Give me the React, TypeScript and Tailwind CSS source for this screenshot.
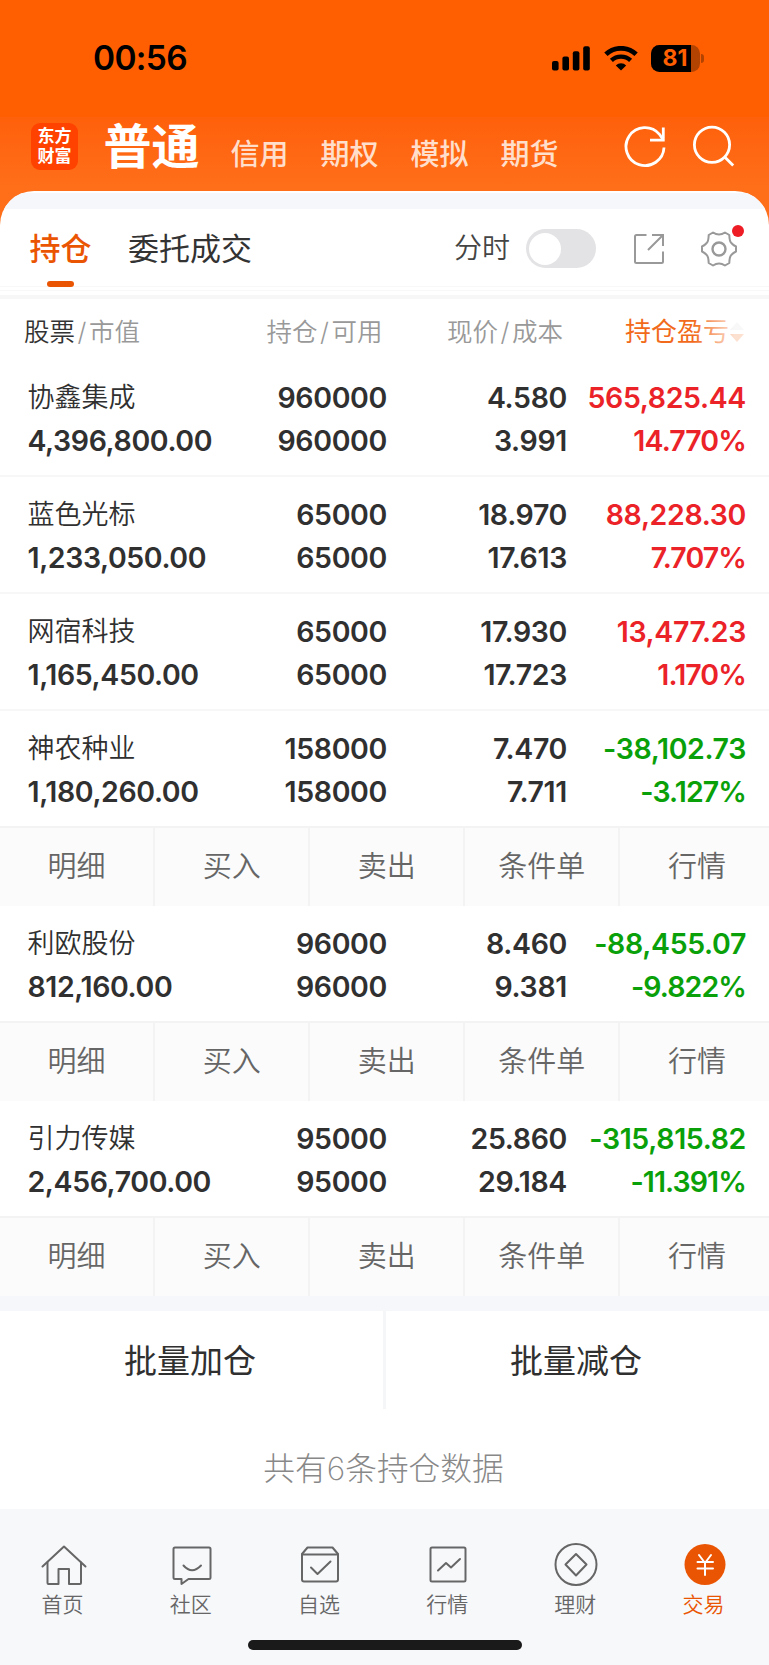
import type { ReactNode } from "react";

type Holding = {
  name: string;
  value: string;
  qty: string;
  available: string;
  price: string;
  cost: string;
  profit: string;
  rate: string;
  expanded?: boolean;
};

const holdings: Holding[] = [
  { name: "协鑫集成", value: "4,396,800.00", qty: "960000", available: "960000", price: "4.580", cost: "3.991", profit: "565,825.44", rate: "14.770%" },
  { name: "蓝色光标", value: "1,233,050.00", qty: "65000", available: "65000", price: "18.970", cost: "17.613", profit: "88,228.30", rate: "7.707%" },
  { name: "网宿科技", value: "1,165,450.00", qty: "65000", available: "65000", price: "17.930", cost: "17.723", profit: "13,477.23", rate: "1.170%" },
  { name: "神农种业", value: "1,180,260.00", qty: "158000", available: "158000", price: "7.470", cost: "7.711", profit: "-38,102.73", rate: "-3.127%", expanded: true },
  { name: "利欧股份", value: "812,160.00", qty: "96000", available: "96000", price: "8.460", cost: "9.381", profit: "-88,455.07", rate: "-9.822%", expanded: true },
  { name: "引力传媒", value: "2,456,700.00", qty: "95000", available: "95000", price: "25.860", cost: "29.184", profit: "-315,815.82", rate: "-11.391%", expanded: true },
];

const actions = ["明细", "买入", "卖出", "条件单", "行情"];

function StatusBar() {
  return (
    <div className="flex h-[117px] items-start justify-between pl-[93px] pr-[65px] pt-[37.5px]">
      <span className="text-[33.5px] font-semibold leading-[41px] tracking-[-0.7px] text-black">00:56</span>
      <div className="flex h-[41px] items-center">
        <svg width="38" height="25" viewBox="0 0 38 25" fill="#000">
          <rect x="0" y="15" width="6.6" height="9.6" rx="2" />
          <rect x="10.4" y="10.4" width="6.6" height="14.2" rx="2" />
          <rect x="20.8" y="5.2" width="6.6" height="19.4" rx="2" />
          <rect x="31.2" y="0.2" width="6.6" height="24.4" rx="2" />
        </svg>
        <svg className="ml-3.5" width="34" height="25" viewBox="0 0 34 25" fill="none" stroke="#000">
          <path d="M1.9 8.3a22 22 0 0 1 30.2 0" strokeWidth="4.8" />
          <path d="M7.4 14.4a14 14 0 0 1 19.2 0" strokeWidth="4.4" />
          <path d="M17 24.6l-5.2-5.2a7.2 7.2 0 0 1 10.4 0z" fill="#000" stroke="none" />
        </svg>
        <div className="relative ml-[13px] flex h-[27px] w-[49px] overflow-hidden rounded-[8.5px] bg-[#b34300]">
          <div className="h-full w-10 bg-black" />
          <span className="absolute inset-0 text-center text-[23px] font-bold leading-[27px] text-[#ff5f00]">81</span>
        </div>
        <div className="ml-[1.5px] h-[9px] w-[3px] rounded-r-full bg-[#b34300]" />
      </div>
    </div>
  );
}

function Header() {
  return (
    <div className="flex h-[106px] bg-gradient-to-b from-[#ff600a] to-[#ff6f1a] to-70% pl-[31px]">
      <div className="mt-[6px] flex h-[47px] w-[47px] flex-col items-center justify-center rounded-[9px] bg-[#ff4200] text-[17px] font-bold leading-[19.5px] text-white">
        <span>东方</span>
        <span>财富</span>
      </div>
      <span className="ml-[25.5px] text-[48px] font-bold leading-[59px] text-white">普通</span>
      <div className="ml-[31px] mt-[19px] flex gap-8 text-[29px] font-medium leading-[38px] text-[#ffdfcc]">
        <span>信用</span>
        <span>期权</span>
        <span>模拟</span>
        <span>期货</span>
      </div>
      <svg className="ml-[64.5px] mt-[7px]" width="44" height="46" viewBox="0 0 44 46" fill="none" stroke="#fff" strokeWidth="2.8">
        <path d="M41 23.5A19 19 0 1 1 36.5 10.3L40 15.6" />
        <path d="M40.3 3.6v12.6H27" />
      </svg>
      <svg className="ml-[25px] mt-[6px]" width="44" height="46" viewBox="0 0 44 46" fill="none" stroke="#fff" strokeWidth="2.8">
        <circle cx="20" cy="21.7" r="17.6" />
        <path d="M32.2 33.6l9 8.8" />
      </svg>
    </div>
  );
}

function Tabs() {
  return (
    <div className="flex h-[77px] items-center pl-[29.5px] pt-0.5">
      <div className="relative text-[31px] font-medium leading-[41px] text-[#ea5504]">
        持仓
        <div className="absolute -bottom-[18px] left-[17px] h-[6px] w-[27px] rounded-full bg-[#ea5504]" />
      </div>
      <span className="ml-[36.5px] text-[31px] leading-[41px] text-[#333]">委托成交</span>
      <span className="ml-[202px] text-[28px] font-[350] leading-[41px] text-[#444]">分时</span>
      <div className="ml-[15.5px] flex h-[39px] w-[70px] items-center rounded-full bg-[#e3e3e5] pl-[3px]">
        <div className="h-8 w-8 rounded-full bg-white" />
      </div>
      <svg className="ml-[37px]" width="32" height="32" viewBox="0 0 32 32" fill="none" stroke="#999" strokeWidth="2">
        <path d="M13.5 2H3.5Q2 2 2 3.5V28.5Q2 30 3.5 30H28.5Q30 30 30 28.5V18.5" />
        <path d="M19 2h11v11M30 2L15 17" />
      </svg>
      <div className="relative ml-[35px]">
        <svg width="38" height="38" viewBox="0 0 38 38" fill="none" stroke="#999" strokeWidth="2" strokeLinejoin="round">
          <path d="M13 2.5Q19 6.5 25 2.5L29.3 5Q29.5 11.5 31.3 13Q33 15 36 16.5V21.5Q33 23 31.3 25Q29.5 26.5 29.3 33L25 35.5Q19 31.5 13 35.5L8.7 33Q8.5 26.5 6.7 25Q5 23 2 21.5V16.5Q5 15 6.7 13Q8.5 11.5 8.7 5Z" />
          <circle cx="19" cy="19" r="6.5" strokeWidth="2.4" />
        </svg>
        <div className="absolute -top-[5px] left-8 h-3 w-3 rounded-full bg-[#ee1c25]" />
      </div>
    </div>
  );
}

function ColumnHead({ first, second, dark }: { first: string; second: string; dark?: boolean }) {
  return (
    <div className="flex items-center text-[#999]">
      <span className={dark ? "text-[#333]" : ""}>{first}</span>
      <span className="w-[14px] text-center">/</span>
      <span>{second}</span>
    </div>
  );
}

function TableHead() {
  return (
    <div className="flex h-[60.6px] items-center pt-[6px] text-[25.5px] font-[350] leading-[34px]">
      <div className="w-[243px] pl-6">
        <ColumnHead first="股票" second="市值" dark />
      </div>
      <div className="flex w-[139.5px] justify-end">
        <ColumnHead first="持仓" second="可用" />
      </div>
      <div className="flex w-[180.5px] justify-end">
        <ColumnHead first="现价" second="成本" />
      </div>
      <div className="relative ml-[62px] flex items-center text-[26px] font-normal text-[#f26a1b]">
        持仓盈亏
        <svg width="16" height="22" viewBox="0 0 16 22">
          <path d="M8 1l7 8H1z" fill="#ddd" />
          <path d="M8 21l7-8H1z" fill="#f26a1b" />
        </svg>
        <div className="absolute inset-y-0 right-0 w-[52px] bg-gradient-to-r from-white/0 to-white/80 to-80%" />
      </div>
    </div>
  );
}

function Cell({ top, bottom, className, percent }: { top: string; bottom: string; className: string; percent?: boolean }) {
  return (
    <div className={`flex flex-col text-right text-[28.5px] font-semibold tracking-[-0.35px] ${className}`}>
      <span>{top}</span>
      <span className={percent ? "tracking-[-0.9px]" : ""}>{bottom}</span>
    </div>
  );
}

function ActionBar() {
  return (
    <div className="flex h-[80.5px] overflow-hidden border-t-2 border-[#f3f3f4] bg-[#fbfbfb]">
      {actions.map((label) => (
        <div key={label} className="flex w-[155.1px] shrink-0 items-center justify-center border-r-2 border-[#f3f3f4] text-[29px] font-[350] text-[#666]">
          {label}
        </div>
      ))}
    </div>
  );
}

function HoldingRow({ item }: { item: Holding }) {
  const color = item.profit.startsWith("-") ? "text-[#09a009]" : "text-[#eb2227]";
  return (
    <>
      <div className={`flex pt-[16px] leading-[43px] text-[#303030] ${item.expanded ? "h-[114.5px]" : "h-[117.2px] border-b-2 border-[#f7f7f8]"}`}>
        <div className="flex w-[247px] flex-col pl-[27.5px]">
          <span className="text-[27px] font-[350]">{item.name}</span>
          <span className="text-[28.5px] font-semibold tracking-[-0.4px]">{item.value}</span>
        </div>
        <Cell top={item.qty} bottom={item.available} className="w-[140px]" />
        <Cell top={item.price} bottom={item.cost} className="w-[180px]" />
        <Cell top={item.profit} bottom={item.rate} percent className={`w-[179px] ${color}`} />
      </div>
      {item.expanded && <ActionBar />}
    </>
  );
}

function NavItem({ label, active, children }: { label: string; active?: boolean; children: ReactNode }) {
  return (
    <div className={`flex w-[128.2px] flex-col items-center ${active ? "text-[#ea5504]" : "text-[#666]"}`}>
      <svg width="46" height="46" viewBox="0 0 46 46" fill="none" stroke="currentColor" strokeWidth="2" strokeLinejoin="round" strokeLinecap="round">
        {children}
      </svg>
      <span className="mt-0.5 -ml-0.5 text-[21px] font-[350] leading-[30px]">{label}</span>
    </div>
  );
}

function BottomNav() {
  return (
    <div className="h-[156px] bg-[#f7f8fa] pt-[32.5px]">
      <div className="-ml-[0.5px] flex">
        <NavItem label="首页">
          <path d="M1.5 24.5L23 4.5l21.5 20" />
          <path d="M6.5 20.5v20.5q0 1 1 1h10V27h10.5v15h11q1 0 1-1V20.5" />
        </NavItem>
        <NavItem label="社区">
          <path d="M6 5.5h34q1.5 0 1.5 1.5v28.5q0 1.5-1.5 1.5H19.5l-7 5v-5H6q-1.5 0-1.5-1.5V7q0-1.5 1.5-1.5z" />
          <path d="M14.5 23.5q8.5 9.5 17.5 0" />
        </NavItem>
        <NavItem label="自选">
          <path d="M10.5 5.5H35.5L41 12V37.5Q41 39.5 39 39.5H7Q5 39.5 5 37.5V12Z" />
          <path d="M5 12.5h36M14 25.5l6.5 6.5 13-12.5" />
        </NavItem>
        <NavItem label="行情">
          <rect x="5.5" y="5.5" width="35" height="34" rx="1.5" />
          <path d="M13 28.5l8-7.5 5 4.5 9-8.5" />
        </NavItem>
        <NavItem label="理财">
          <circle cx="23" cy="22.5" r="20.5" />
          <path d="M23 12l10.5 10.5L23 33.5 12.5 22.5z" />
        </NavItem>
        <NavItem label="交易" active>
          <circle cx="23" cy="22.5" r="20.5" fill="currentColor" stroke="none" />
          <path d="M17 13l6 8 6-8M23 21v12M15.5 20h15.5M15.5 26.5h15.5" stroke="#fff" />
        </NavItem>
      </div>
      <div className="mx-auto mt-5 h-[10px] w-[274px] rounded-full bg-[#1a1a1a]" />
    </div>
  );
}

export default function App() {
  return (
    <div className="h-[1665px] w-[769px] overflow-hidden bg-[#ff5f00] font-['Inter','Noto_Sans_CJK_SC',sans-serif]">
      <StatusBar />
      <Header />
      <div className="relative -mt-[32px] overflow-hidden rounded-t-[34px] bg-white">
        <div className="mt-[2px] h-4 bg-[#f6f7fa]" />
        <Tabs />
        <div className="h-[5px] border-y border-[#f8f8f9]" />
        <div className="mt-[4px] h-[4px] bg-[#f7f7f8]" />
        <TableHead />
        {holdings.map((item) => (
          <HoldingRow key={item.name} item={item} />
        ))}
        <div className="h-[15px] bg-[#f6f7fa]" />
        <div className="flex h-[98px] text-[33px] leading-[101px] text-[#303030]">
          <div className="w-[386px] border-r-[3px] border-[#f5f6f8] pr-[3px] text-center">批量加仓</div>
          <div className="flex-1 pr-[3px] text-center">批量减仓</div>
        </div>
        <div className="h-[100px] pr-0.5 pt-[38px] text-center text-[31.7px] font-extralight leading-[44px] text-[#888]">
          共有6条持仓数据
        </div>
        <BottomNav />
      </div>
    </div>
  );
}
